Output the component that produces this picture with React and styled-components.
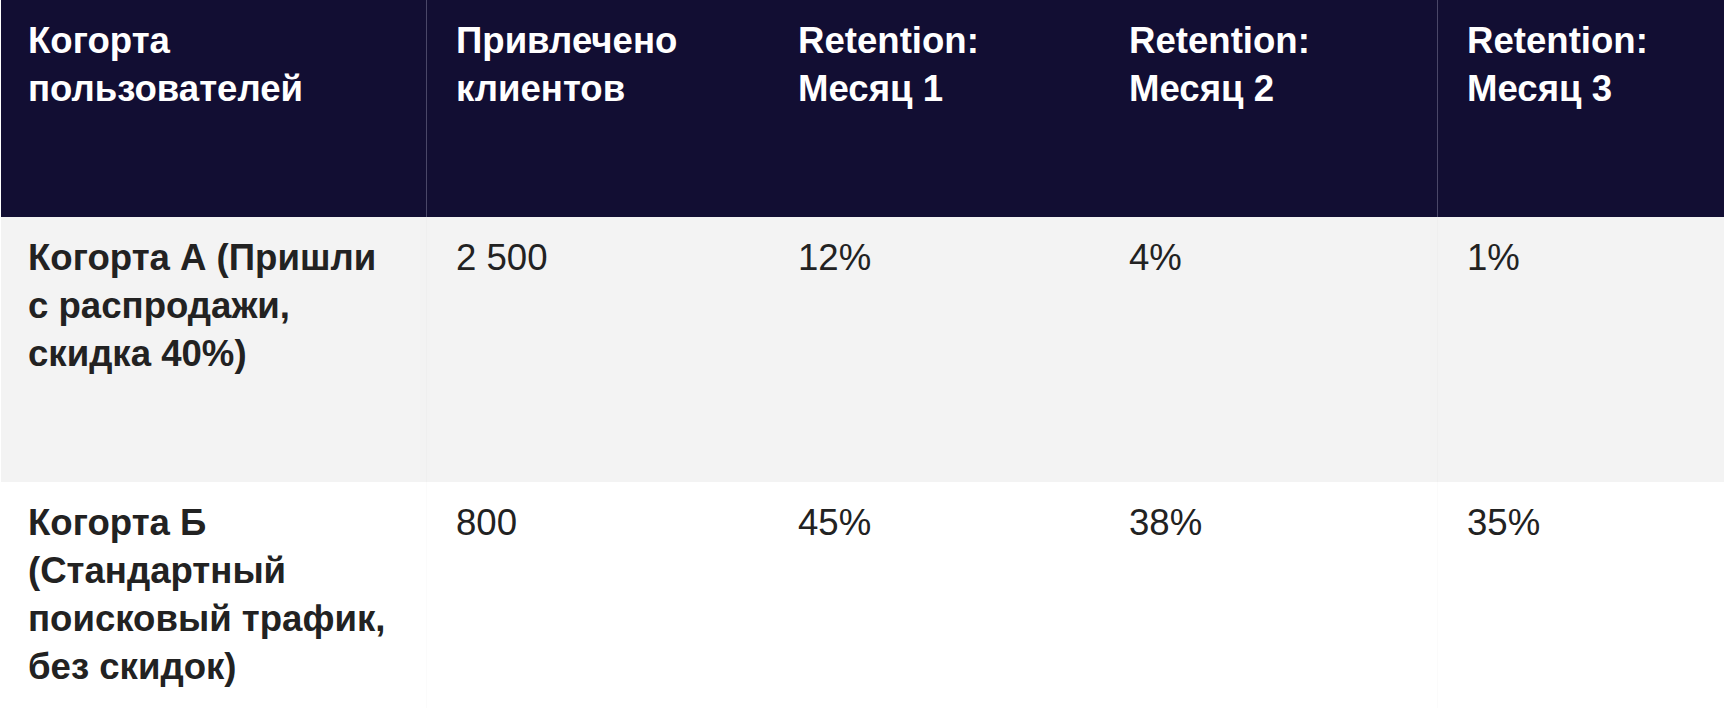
import React from 'react';
import styled, { createGlobalStyle } from 'styled-components';

const GlobalStyle = createGlobalStyle`
  html, body {
    margin: 0;
    padding: 0;
    background: #ffffff;
  }
  body {
    font-family: "Liberation Sans", Arial, sans-serif;
  }
`

const Table = styled.table`
  width: 100%;
  border-collapse: collapse;
  table-layout: fixed;
  font-size: 36.6px;
  line-height: 48px;
`

const HeadRow = styled.tr`
  background: #120e33;
`

const Row = styled.tr`
  background: ${props => (props.$shaded ? '#f3f3f3' : '#ffffff')};
`

const HeadCell = styled.th`
  padding: 17px 29px 104px;
  padding-left: ${props => (props.$first ? '27px' : '29px')};
  text-align: left;
  vertical-align: top;
  font-weight: bold;
  color: #ffffff;
  border-left: 1px solid ${props => (props.$divider ? '#4a4768' : 'transparent')};
`

const Cell = styled.td`
  padding: 17px 29px 104px;
  padding-left: ${props => (props.$first ? '27px' : '29px')};
  vertical-align: top;
  color: #222222;
  font-weight: ${props => (props.$first ? 'bold' : 'normal')};
  border-left: 1px solid ${props => (props.$divider ? 'rgba(0, 0, 0, 0.015)' : 'transparent')};
`

const columns = [
  { title: 'Когорта пользователей', width: 426 },
  { title: 'Привлечено клиентов', width: 342, divider: true },
  { title: 'Retention: Месяц 1', width: 331 },
  { title: 'Retention: Месяц 2', width: 338 },
  { title: 'Retention: Месяц 3', divider: true },
]

const rows = [
  ['Когорта А (Пришли с распродажи, скидка 40%)', '2 500', '12%', '4%', '1%'],
  ['Когорта Б (Стандартный поисковый трафик, без скидок)', '800', '45%', '38%', '35%'],
]

export default function App() {
  return (
    <>
      <GlobalStyle />
      <Table>
        <colgroup>
          {columns.map((col, i) => (
            <col key={i} style={col.width ? { width: col.width } : undefined} />
          ))}
        </colgroup>
        <thead>
          <HeadRow>
            {columns.map((col, i) => (
              <HeadCell key={i} $first={i === 0} $divider={col.divider}>{col.title}</HeadCell>
            ))}
          </HeadRow>
        </thead>
        <tbody>
          {rows.map((row, r) => (
            <Row key={r} $shaded={r % 2 === 0}>
              {row.map((value, i) => (
                <Cell key={i} $first={i === 0} $divider={columns[i].divider}>{value}</Cell>
              ))}
            </Row>
          ))}
        </tbody>
      </Table>
    </>
  )
}
